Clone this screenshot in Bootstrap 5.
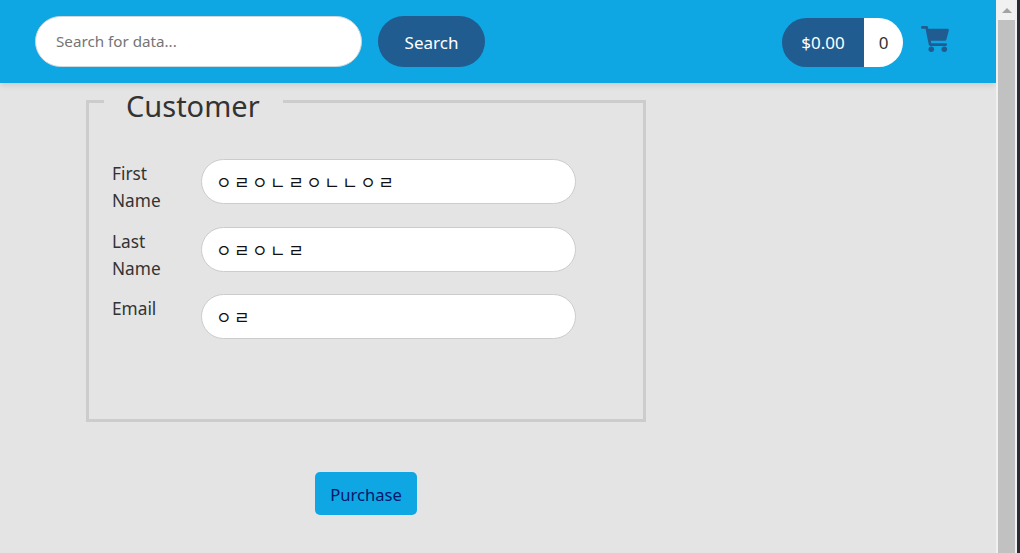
<!DOCTYPE html>
<html lang="en">
<head>
    <meta charset="UTF-8">
    <meta name="viewport" content="width=device-width, initial-scale=1.0">
    <title>Checkout</title>
    <link href="https://cdn.jsdelivr.net/npm/bootstrap@5.3.0/dist/css/bootstrap.min.css" rel="stylesheet">
    <style>
        html, body {
            height: 553px;
            overflow: hidden;
        }

        body {
            background: #e4e4e4;
            color: #333;
            font-family: "Noto Sans", "Noto Sans CJK KR", sans-serif;
            font-size: 17.25px;
            line-height: 27px;
        }

        .page-area {
            width: 996px;
        }

        .top-bar {
            height: 83px;
            background: #0ea7e4;
            box-shadow: 0 2px 6px rgba(0, 0, 0, .12);
            padding: 16px 47px 16px 35px;
        }

        .search-box {
            width: 327px;
            height: 51px;
            padding: 0 20px 2px;
            border: 1px solid #cfd8dc;
            border-radius: 26px;
            font-size: 15.2px;
            color: #333;
        }

        .search-box::placeholder {
            color: #757575;
            opacity: 1;
        }

        .search-btn {
            width: 107px;
            height: 51px;
            margin-left: 16px;
            padding: 1px 0 0;
            border: 0;
            border-radius: 26px;
            background: #205c90;
            color: #fff;
            font-size: 17px;
        }

        .cart-total {
            width: 121px;
            height: 49px;
            margin-top: 2px;
            border-radius: 25px;
            overflow: hidden;
            text-align: center;
            line-height: 49px;
            font-size: 17px;
        }

        .cart-money {
            width: 82px;
            background: #205c90;
            color: #fff;
        }

        .cart-count {
            width: 39px;
            background: #fff;
            color: #333;
        }

        .cart-icon {
            width: 28px;
            height: 26px;
            margin: 10px 0 0 18px;
            fill: #205c90;
        }

        .customer-box {
            width: 560px;
            height: 344px;
            margin: -5px 0 0 86px;
            padding: 35px 23px 0;
            border: 3px solid #ccc;
        }

        .customer-box legend {
            float: none;
            width: auto;
            margin: 0 0 0 -8px;
            padding: 10px 23px 0 22px;
            font-size: 29px;
            line-height: 36px;
        }

        .field-row {
            margin-bottom: 12.5px;
        }

        .field-label {
            width: 89px;
            padding: 1px 25px 0 0;
            margin: 0;
        }

        .field-input {
            width: 375px;
            height: 45px;
            padding: 0 14px;
            border: 1px solid #ccc;
            border-radius: 23px;
            background: #fff;
            color: #111;
            font-size: 17px;
            letter-spacing: 2.4px;
        }

        .purchase-btn {
            width: 102px;
            height: 43px;
            margin: 50px 0 0 315px;
            padding: 1px 0 0;
            border: 0;
            border-radius: 5px;
            background: #0ea7e4;
            color: #00186b;
            font-size: 16.6px;
        }

        .scroll-rail {
            width: 21px;
            background: #f1f1f1;
            padding: 0 2px;
        }

        .scroll-arrow {
            width: 0;
            height: 0;
            margin: 8px auto 7px;
            border-left: 5px solid transparent;
            border-right: 5px solid transparent;
            border-bottom: 5px solid #a3a3a3;
        }

        .scroll-thumb {
            height: 533px;
            background: #c1c1c1;
        }

        .window-edge {
            width: 3px;
            background: #2b2b33;
        }
    </style>
</head>
<body>
    <div class="d-flex">
        <div class="page-area">
            <nav class="top-bar d-flex justify-content-between">
                <form class="d-flex">
                    <input type="text" class="search-box" placeholder="Search for data...">
                    <button type="button" class="search-btn">Search</button>
                </form>
                <div class="d-flex">
                    <div class="cart-total d-flex">
                        <span class="cart-money">$0.00</span>
                        <span class="cart-count">0</span>
                    </div>
                    <svg class="cart-icon" viewBox="0 0 30 28">
                        <path d="M0 1.5C0 .7.7 0 1.500 0H6c.7 0 1.300.5 1.400 1.200L7.800 3H28.500c1 0 1.700.9 1.400 1.900l-2.700 10c-.2.700-.8 1.100-1.400 1.100H10.500l.5 2.500h15.500c.8 0 1.500.7 1.500 1.500s-.7 1.500-1.500 1.500H9.800c-.7 0-1.300-.5-1.500-1.200L4.800 3H1.500C.7 3 0 2.300 0 1.500z"/>
                        <circle cx="11" cy="25" r="3"/>
                        <circle cx="25" cy="25" r="3"/>
                    </svg>
                </div>
            </nav>
            <fieldset class="customer-box">
                <legend>Customer</legend>
                <div class="field-row d-flex">
                    <label class="field-label">First Name</label>
                    <input type="text" class="field-input" value="ㅇㄹㅇㄴㄹㅇㄴㄴㅇㄹ">
                </div>
                <div class="field-row d-flex">
                    <label class="field-label">Last Name</label>
                    <input type="text" class="field-input" value="ㅇㄹㅇㄴㄹ">
                </div>
                <div class="field-row d-flex">
                    <label class="field-label">Email</label>
                    <input type="text" class="field-input" value="ㅇㄹ">
                </div>
            </fieldset>
            <button type="button" class="purchase-btn d-block">Purchase</button>
        </div>
        <div class="scroll-rail">
            <div class="scroll-arrow"></div>
            <div class="scroll-thumb"></div>
        </div>
        <div class="window-edge"></div>
    </div>
    <script src="https://cdn.jsdelivr.net/npm/bootstrap@5.3.0/dist/js/bootstrap.bundle.min.js"></script>
</body>
</html>
